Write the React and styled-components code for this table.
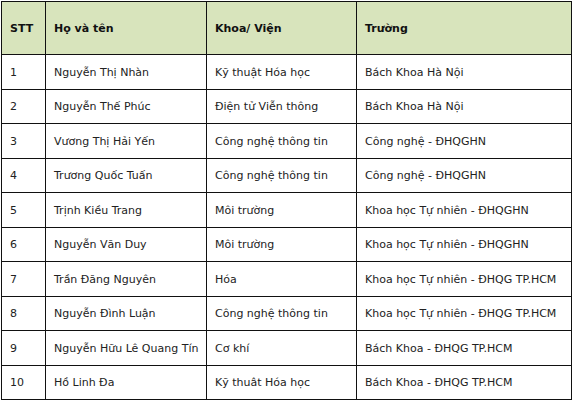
import React from "react";
import styled, { createGlobalStyle } from "styled-components";

const rows = [
  ["1", "Nguyễn Thị Nhàn", "Kỹ thuật Hóa học", "Bách Khoa Hà Nội"],
  ["2", "Nguyễn Thế Phúc", "Điện tử Viễn thông", "Bách Khoa Hà Nội"],
  ["3", "Vương Thị Hải Yến", "Công nghệ thông tin", "Công nghệ - ĐHQGHN"],
  ["4", "Trương Quốc Tuấn", "Công nghệ thông tin", "Công nghệ - ĐHQGHN"],
  ["5", "Trịnh Kiều Trang", "Môi trường", "Khoa học Tự nhiên - ĐHQGHN"],
  ["6", "Nguyễn Văn Duy", "Môi trường", "Khoa học Tự nhiên - ĐHQGHN"],
  ["7", "Trần Đăng Nguyên", "Hóa", "Khoa học Tự nhiên - ĐHQG TP.HCM"],
  ["8", "Nguyễn Đình Luận", "Công nghệ thông tin", "Khoa học Tự nhiên - ĐHQG TP.HCM"],
  ["9", "Nguyễn Hữu Lê Quang Tín", "Cơ khí", "Bách Khoa - ĐHQG TP.HCM"],
  ["10", "Hồ Linh Đa", "Kỹ thuât Hóa học", "Bách Khoa - ĐHQG TP.HCM"],
];

const App = () => {
  return (
    <>
      <GlobalStyle />
      <Wrap>
        <Table>
          <colgroup>
            <Col $w={44} />
            <Col $w={161} />
            <Col $w={150} />
            <Col $w={215} />
          </colgroup>
          <thead>
            <tr>
              <Th>STT</Th>
              <Th>Họ và tên</Th>
              <Th>Khoa/ Viện</Th>
              <Th>Trường</Th>
            </tr>
          </thead>
          <tbody>
            {rows.map((r) => (
              <Row key={r[0]}>
                {r.map((c, i) => (
                  <Td key={i}>{c}</Td>
                ))}
              </Row>
            ))}
          </tbody>
        </Table>
      </Wrap>
    </>
  );
};

export default App;

const GlobalStyle = createGlobalStyle`
  body {
    margin: 0;
    background: #ffffff;
  }
`;

const Wrap = styled.div`
  padding: 1px 0 0 1px;
`;

const Table = styled.table`
  border-collapse: collapse;
  table-layout: fixed;
  width: 571px;
  font-family: "DejaVu Sans", Verdana, sans-serif;
  font-size: 11px;
  color: #222;
`;

const Col = styled.col`
  width: ${(p) => p.$w}px;
`;

const Th = styled.th`
  height: 52px;
  padding: 0 8px;
  text-align: left;
  vertical-align: middle;
  font-weight: bold;
  background: #d8e4bc;
  border: 1px solid #111;
  color: #111;
`;

const Row = styled.tr`
  height: 35px;
  &:nth-child(even) {
    height: 34px;
  }
`;

const Td = styled.td`
  padding: 0 8px;
  vertical-align: middle;
  border: 1px solid #111;
  white-space: nowrap;
`;
